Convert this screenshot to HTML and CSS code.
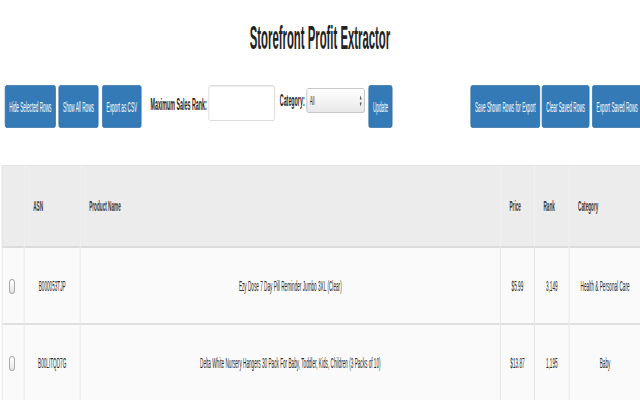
FILE: index.html
```html
<!DOCTYPE html>
<html lang="en">
<head>
  <meta charset="UTF-8">
  <title>Storefront Profit Extractor</title>
  <link rel="stylesheet" href="styles.css">
</head>
<body>
  <div class="page">
    <h1 class="title">Storefront Profit Extractor</h1>

    <div class="toolbar">
      <div class="group">
        <button class="btn btn-hide">Hide Selected Rows</button>
        <button class="btn btn-show">Show All Rows</button>
        <button class="btn btn-csv">Export as CSV</button>
        <label class="field-label rank-label" for="maxRank">Maximum Sales Rank:</label>
        <input class="rank-input" id="maxRank" type="text">
        <label class="field-label cat-label" for="category">Category:</label>
        <span class="select-wrap">
          <select class="cat-select" id="category">
            <option>All</option>
            <option>Baby</option>
            <option>Health &amp; Personal Care</option>
          </select>
          <svg class="select-arrows" viewBox="0 0 8 14" width="8" height="14">
            <path d="M1 5.5 L4 1.5 L7 5.5 Z M1 8.5 L4 12.5 L7 8.5 Z" fill="#555"/>
          </svg>
        </span>
        <button class="btn">Update</button>
      </div>

      <div class="group group-right">
        <button class="btn">Save Shown Rows for Export</button>
        <button class="btn btn-clear">Clear Saved Rows</button>
        <button class="btn btn-export">Export Saved Rows</button>
      </div>
    </div>

    <table class="products">
      <colgroup>
        <col class="c-check">
        <col class="c-asin">
        <col class="c-name">
        <col class="c-price">
        <col class="c-rank">
        <col class="c-cat">
      </colgroup>
      <thead>
        <tr>
          <th></th>
          <th>ASN</th>
          <th>Product Name</th>
          <th>Price</th>
          <th>Rank</th>
          <th>Category</th>
        </tr>
      </thead>
      <tbody>
        <tr>
          <td class="check"><input type="checkbox" class="row-check"></td>
          <td>B000053TJP</td>
          <td>Ezy Dose 7 Day Pill Reminder Jumbo 3XL (Clear)</td>
          <td>$5.99</td>
          <td>3,149</td>
          <td>Health &amp; Personal Care</td>
        </tr>
        <tr>
          <td class="check"><input type="checkbox" class="row-check"></td>
          <td>B00LITQD7G</td>
          <td>Delta White Nursery Hangers 30 Pack For Baby, Toddler, Kids, Children (3 Packs of 10)</td>
          <td>$13.87</td>
          <td>1,195</td>
          <td>Baby</td>
        </tr>
      </tbody>
    </table>
  </div>
</body>
</html>
```

FILE: styles.css
```css
html, body {
  margin: 0;
  overflow: hidden;
}
body {
  font-family: "Liberation Sans", Arial, sans-serif;
  color: #2a2a2a;
  background: #fff;
}
/* the whole page was captured squeezed to a third of its width */
.page {
  width: 1920px;
  transform: scaleX(0.3333);
  transform-origin: 0 0;
}
.title {
  margin: 17px 0 0;
  font-size: 34px;
  line-height: 40px;
  font-weight: bold;
  text-align: center;
  color: #222;
}
.toolbar {
  display: flex;
  justify-content: space-between;
  align-items: flex-start;
  margin-top: 28px;
  padding-left: 15px;
}
.group {
  display: flex;
  align-items: flex-start;
}
.group-right {
  margin-right: -6px;
}
.btn {
  height: 43px;
  padding: 0 12px;
  font-family: inherit;
  font-size: 14px;
  color: #fff;
  background: #337ab7;
  border: 1px solid #2e6da4;
  border-radius: 4px;
  cursor: pointer;
}
.btn-hide { margin-right: 9px; }
.btn-show { margin-right: 12px; }
.btn-csv { margin-right: 27px; }
.btn-clear { margin-left: 6px; }
.btn-export { margin-left: 9px; }
.field-label {
  font-size: 16px;
  font-weight: bold;
  line-height: 20px;
  margin-right: 6px;
  color: #222;
}
.rank-label { margin-top: 10px; }
.cat-label { margin-top: 6px; }
.rank-input {
  width: 198px;
  height: 36px;
  box-sizing: border-box;
  margin: 0 15px 0 0;
  border: 1px solid #ccc;
  border-radius: 4px;
  box-shadow: inset 0 1px 1px rgba(0, 0, 0, .075);
}
.select-wrap {
  position: relative;
  width: 174px;
  height: 25px;
  margin: 3px 12px 0 0;
}
.cat-select {
  -webkit-appearance: none;
  appearance: none;
  width: 100%;
  height: 25px;
  padding: 0 0 0 8px;
  font-family: inherit;
  font-size: 13px;
  color: #222;
  border: 1px solid #aaa;
  border-radius: 4px;
  background: linear-gradient(#fff, #e8e8e8);
}
.select-arrows {
  position: absolute;
  right: 8px;
  top: 6px;
  pointer-events: none;
}
.products {
  margin: 37px 0 0 5px;
  width: 1915px;
  table-layout: fixed;
  border-collapse: collapse;
  font-size: 14px;
}
.c-check { width: 66px; }
.c-asin { width: 168px; }
.c-name { width: 1261px; }
.c-price { width: 102px; }
.c-rank { width: 104px; }
.c-cat { width: 214px; }
.products th {
  height: 80px;
  padding: 0 27px;
  text-align: left;
  font-weight: bold;
  color: #3a3a3a;
  background: #ececec;
  border-top: 1px solid #e2e2e2;
  border-bottom: 2px solid #dcdcdc;
}
.products th:first-child {
  border-left: 3px solid #e0e0e0;
}
.products td {
  height: 75px;
  padding: 0 8px;
  text-align: center;
  vertical-align: middle;
  background: #fafafa;
  border-left: 3px solid #e6e6e6;
  border-bottom: 2px solid #e0e0e0;
}
.products td.check {
  text-align: left;
  padding-left: 19px;
}
.row-check {
  -webkit-appearance: none;
  appearance: none;
  width: 18px;
  height: 15px;
  margin: 0;
  vertical-align: middle;
  border: 1px solid #a8a8a8;
  border-left-width: 3px;
  border-right-width: 3px;
  border-radius: 9px / 4px;
  background: linear-gradient(#fff, #e6e6e6);
}
```
